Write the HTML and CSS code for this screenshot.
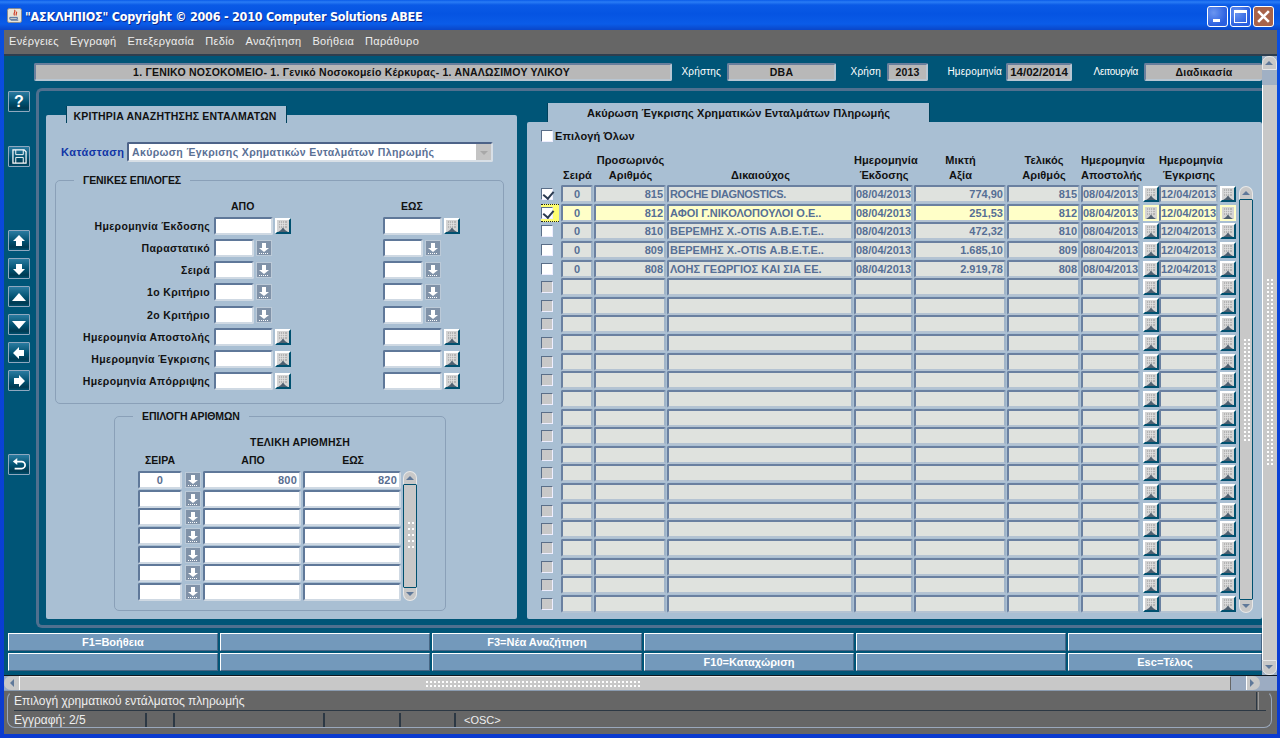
FILE: index.html
```html
<!DOCTYPE html>
<html lang="el">
<head>
<meta charset="utf-8">
<title>ΑΣΚΛΗΠΙΟΣ</title>
<link rel="stylesheet" href="styles.css">
</head>
<body>
<svg class="defs" width="0" height="0" aria-hidden="true">
  <symbol id="cal" viewBox="0 0 12 12">
    <rect width="12" height="12" fill="#d4d4d4"/>
    <path d="M2 1h8v7H2z" fill="#b4b4b4"/>
    <path d="M3.5 1v7M5.5 1v7M7.5 1v7M2 3.5h8M2 5.5h8" stroke="#e4e4e4" stroke-width=".7"/>
    <path d="M1 12l3-2 2-2.5L8 10l3 2z" fill="#4f6070"/>
  </symbol>
  <symbol id="drop" viewBox="0 0 14 14">
    <path d="M5 2h4v5h3l-5 4-5-4h3z" fill="#fff"/>
    <path d="M2 12.5h10" stroke="#fff" stroke-dasharray="1 1"/>
  </symbol>
</svg>

<div class="window">
  <header class="titlebar">
    <svg class="appicon" viewBox="0 0 16 16"><rect x=".5" y=".5" width="15" height="15" rx="2" fill="#e8e4d8" stroke="#8a8a8a"/><path d="M8 2c2 2-2 3 0 6M10 4c1 1-1 2 0 4" stroke="#d0402a" fill="none" stroke-width="1.3"/><path d="M3 10h8v2H3zM4 13h8" stroke="#4a6a9a" fill="none"/></svg>
    <span class="title">"ΑΣΚΛΗΠΙΟΣ" Copyright © 2006 - 2010 Computer Solutions ABEE</span>
    <span class="caps">
      <span class="cap"><i class="g-min"></i></span>
      <span class="cap"><i class="g-max"></i></span>
      <span class="cap close"><svg viewBox="0 0 14 14"><path d="M2 2l10 10M12 2L2 12" stroke="#fff" stroke-width="2.4"/></svg></span>
    </span>
  </header>

  <nav class="menu">
    <span>Ενέργειες</span><span>Εγγραφή</span><span>Επεξεργασία</span><span>Πεδίο</span><span>Αναζήτηση</span><span>Βοήθεια</span><span>Παράθυρο</span>
  </nav>

  <div class="client">
    <div class="stage">
      <div class="info">
        <div class="ifield org">1. ΓΕΝΙΚΟ ΝΟΣΟΚΟΜΕΙΟ- 1. Γενικό Νοσοκομείο Κέρκυρας- 1. ΑΝΑΛΩΣΙΜΟΥ ΥΛΙΚΟΥ</div>
        <label class="ilabel l1">Χρήστης</label><div class="ifield user">DBA</div>
        <label class="ilabel l2">Χρήση</label><div class="ifield year">2013</div>
        <label class="ilabel l3">Ημερομηνία</label><div class="ifield date">14/02/2014</div>
        <label class="ilabel l4">Λειτουργία</label><div class="ifield mode">Διαδικασία</div>
      </div>

      <div class="workspace">
        <aside class="tools">
          <button class="tool t-help">?</button>
          <button class="tool t-save"><svg viewBox="0 0 16 16"><path d="M1 1h12l2 2v12H1z" fill="none" stroke="#fff" stroke-width="1.3"/><path d="M4 1v5h8V1M4 15V9h8v6" fill="none" stroke="#fff"/></svg></button>
          <button class="tool t-up"><svg viewBox="0 0 14 14"><path d="M7 1l6 6H10v5H4V7H1z" fill="#fff"/></svg></button>
          <button class="tool"><svg viewBox="0 0 14 14"><path d="M7 13L1 7h3V2h6v5h3z" fill="#fff"/></svg></button>
          <button class="tool"><svg viewBox="0 0 14 14"><path d="M7 3l7 8H0z" fill="#fff"/></svg></button>
          <button class="tool"><svg viewBox="0 0 14 14"><path d="M7 11L0 3h14z" fill="#fff"/></svg></button>
          <button class="tool"><svg viewBox="0 0 14 14"><path d="M1 7l6-6v3h5v6H7v3z" fill="#fff"/></svg></button>
          <button class="tool"><svg viewBox="0 0 14 14"><path d="M13 7L7 1v3H2v6h5v3z" fill="#fff"/></svg></button>
          <button class="tool t-back"><svg viewBox="0 0 16 16"><path d="M5 4h6a3.5 3.5 0 010 8H3" fill="none" stroke="#fff" stroke-width="2"/><path d="M6 0L1 4l5 4z" fill="#fff"/></svg></button>
        </aside>

        <main class="frame">
          <section class="panel left">
            <h2 class="tab ltab">ΚΡΙΤΗΡΙΑ ΑΝΑΖΗΤΗΣΗΣ ΕΝΤΑΛΜΑΤΩΝ</h2>
            <div class="status-row">
              <label>Κατάσταση</label>
              <div class="select">Ακύρωση Έγκρισης Χρηματικών Ενταλμάτων Πληρωμής<span class="sel-btn"></span></div>
            </div>

            <fieldset class="group general">
              <legend>ΓΕΝΙΚΕΣ ΕΠΙΛΟΓΕΣ</legend>
              <div class="crit head"><span></span><b class="hfrom">ΑΠΟ</b><b class="hto">ΕΩΣ</b></div>
              <div class="crit"><label>Ημερομηνία Έκδοσης</label><div class="pair"><i class="inp w-d"></i><svg class="calb"><use href="#cal"/></svg></div><div class="pair"><i class="inp w-d"></i><svg class="calb"><use href="#cal"/></svg></div></div>
              <div class="crit"><label>Παραστατικό</label><div class="pair"><i class="inp w-s"></i><svg class="dropb"><use href="#drop"/></svg></div><div class="pair"><i class="inp w-s"></i><svg class="dropb"><use href="#drop"/></svg></div></div>
              <div class="crit"><label>Σειρά</label><div class="pair"><i class="inp w-s"></i><svg class="dropb"><use href="#drop"/></svg></div><div class="pair"><i class="inp w-s"></i><svg class="dropb"><use href="#drop"/></svg></div></div>
              <div class="crit"><label>1ο Κριτήριο</label><div class="pair"><i class="inp w-s"></i><svg class="dropb"><use href="#drop"/></svg></div><div class="pair"><i class="inp w-s"></i><svg class="dropb"><use href="#drop"/></svg></div></div>
              <div class="crit"><label>2ο Κριτήριο</label><div class="pair"><i class="inp w-s"></i><svg class="dropb"><use href="#drop"/></svg></div><div class="pair"><i class="inp w-s"></i><svg class="dropb"><use href="#drop"/></svg></div></div>
              <div class="crit"><label>Ημερομηνία Αποστολής</label><div class="pair"><i class="inp w-d"></i><svg class="calb"><use href="#cal"/></svg></div><div class="pair"><i class="inp w-d"></i><svg class="calb"><use href="#cal"/></svg></div></div>
              <div class="crit"><label>Ημερομηνία Έγκρισης</label><div class="pair"><i class="inp w-d"></i><svg class="calb"><use href="#cal"/></svg></div><div class="pair"><i class="inp w-d"></i><svg class="calb"><use href="#cal"/></svg></div></div>
              <div class="crit"><label>Ημερομηνία Απόρριψης</label><div class="pair"><i class="inp w-d"></i><svg class="calb"><use href="#cal"/></svg></div><div class="pair"><i class="inp w-d"></i><svg class="calb"><use href="#cal"/></svg></div></div>
            </fieldset>

            <fieldset class="group numbers">
              <legend>ΕΠΙΛΟΓΗ ΑΡΙΘΜΩΝ</legend>
              <div class="num-title">ΤΕΛΙΚΗ ΑΡΙΘΜΗΣΗ</div>
              <div class="num-head"><b>ΣΕΙΡΑ</b><b>ΑΠΟ</b><b>ΕΩΣ</b></div>
              <div class="num-body">
                <div class="num-rows">
                  <div class="nrow"><i class="inp c">0</i><svg class="dropb"><use href="#drop"/></svg><i class="inp r">800</i><i class="inp r">820</i></div>
                  <div class="nrow"><i class="inp"></i><svg class="dropb"><use href="#drop"/></svg><i class="inp"></i><i class="inp"></i></div>
                  <div class="nrow"><i class="inp"></i><svg class="dropb"><use href="#drop"/></svg><i class="inp"></i><i class="inp"></i></div>
                  <div class="nrow"><i class="inp"></i><svg class="dropb"><use href="#drop"/></svg><i class="inp"></i><i class="inp"></i></div>
                  <div class="nrow"><i class="inp"></i><svg class="dropb"><use href="#drop"/></svg><i class="inp"></i><i class="inp"></i></div>
                  <div class="nrow"><i class="inp"></i><svg class="dropb"><use href="#drop"/></svg><i class="inp"></i><i class="inp"></i></div>
                  <div class="nrow"><i class="inp"></i><svg class="dropb"><use href="#drop"/></svg><i class="inp"></i><i class="inp"></i></div>
                </div>
                <div class="vbar small"><span class="up"></span><span class="track"><span class="grip"></span></span><span class="down"></span></div>
              </div>
            </fieldset>
          </section>

          <section class="panel right">
            <h2 class="tab rtab">Ακύρωση Έγκρισης Χρηματικών Ενταλμάτων Πληρωμής</h2>
            <div class="select-all"><i class="cb"></i><span>Επιλογή Όλων</span></div>
            <div class="grid-area">
              <div class="gcols ghead">
                <span></span><b>Σειρά</b><b>Προσωρινός<br>Αριθμός</b><b>Δικαιούχος</b><b>Ημερομηνία<br>Έκδοσης</b><b>Μικτή<br>Αξία</b><b>Τελικός<br>Αριθμός</b><b>Ημερομηνία<br>Αποστολής</b><span></span><b>Ημερομηνία<br>Έγκρισης</b><span></span>
              </div>
              <div class="gbody">
                <div class="grows">
                  <div class="gcols row"><span class="cbc"><i class="cb on"></i></span><i class="f c">0</i><i class="f r">815</i><i class="f latin">ROCHE DIAGNOSTICS.</i><i class="f d">08/04/2013</i><i class="f r">774,90</i><i class="f r">815</i><i class="f d">08/04/2013</i><svg class="calb"><use href="#cal"/></svg><i class="f d">12/04/2013</i><svg class="calb"><use href="#cal"/></svg></div>
                  <div class="gcols row cur"><span class="cbc"><i class="cb on"></i></span><i class="f c">0</i><i class="f r">812</i><i class="f">ΑΦΟΙ Γ.ΝΙΚΟΛΟΠΟΥΛΟΙ Ο.Ε..</i><i class="f d">08/04/2013</i><i class="f r">251,53</i><i class="f r">812</i><i class="f d">08/04/2013</i><svg class="calb"><use href="#cal"/></svg><i class="f d">12/04/2013</i><svg class="calb"><use href="#cal"/></svg></div>
                  <div class="gcols row"><span class="cbc"><i class="cb"></i></span><i class="f c">0</i><i class="f r">810</i><i class="f">ΒΕΡΕΜΗΣ Χ.-OTIS Α.Β.Ε.Τ.Ε..</i><i class="f d">08/04/2013</i><i class="f r">472,32</i><i class="f r">810</i><i class="f d">08/04/2013</i><svg class="calb"><use href="#cal"/></svg><i class="f d">12/04/2013</i><svg class="calb"><use href="#cal"/></svg></div>
                  <div class="gcols row"><span class="cbc"><i class="cb"></i></span><i class="f c">0</i><i class="f r">809</i><i class="f">ΒΕΡΕΜΗΣ Χ.-OTIS Α.Β.Ε.Τ.Ε..</i><i class="f d">08/04/2013</i><i class="f r">1.685,10</i><i class="f r">809</i><i class="f d">08/04/2013</i><svg class="calb"><use href="#cal"/></svg><i class="f d">12/04/2013</i><svg class="calb"><use href="#cal"/></svg></div>
                  <div class="gcols row"><span class="cbc"><i class="cb"></i></span><i class="f c">0</i><i class="f r">808</i><i class="f">ΛΟΗΣ ΓΕΩΡΓΙΟΣ ΚΑΙ ΣΙΑ ΕΕ.</i><i class="f d">08/04/2013</i><i class="f r">2.919,78</i><i class="f r">808</i><i class="f d">08/04/2013</i><svg class="calb"><use href="#cal"/></svg><i class="f d">12/04/2013</i><svg class="calb"><use href="#cal"/></svg></div>
                  <div class="gcols row"><span class="cbc"><i class="cb dis"></i></span><i class="f"></i><i class="f"></i><i class="f"></i><i class="f"></i><i class="f"></i><i class="f"></i><i class="f"></i><svg class="calb"><use href="#cal"/></svg><i class="f"></i><svg class="calb"><use href="#cal"/></svg></div>
                  <div class="gcols row"><span class="cbc"><i class="cb dis"></i></span><i class="f"></i><i class="f"></i><i class="f"></i><i class="f"></i><i class="f"></i><i class="f"></i><i class="f"></i><svg class="calb"><use href="#cal"/></svg><i class="f"></i><svg class="calb"><use href="#cal"/></svg></div>
                  <div class="gcols row"><span class="cbc"><i class="cb dis"></i></span><i class="f"></i><i class="f"></i><i class="f"></i><i class="f"></i><i class="f"></i><i class="f"></i><i class="f"></i><svg class="calb"><use href="#cal"/></svg><i class="f"></i><svg class="calb"><use href="#cal"/></svg></div>
                  <div class="gcols row"><span class="cbc"><i class="cb dis"></i></span><i class="f"></i><i class="f"></i><i class="f"></i><i class="f"></i><i class="f"></i><i class="f"></i><i class="f"></i><svg class="calb"><use href="#cal"/></svg><i class="f"></i><svg class="calb"><use href="#cal"/></svg></div>
                  <div class="gcols row"><span class="cbc"><i class="cb dis"></i></span><i class="f"></i><i class="f"></i><i class="f"></i><i class="f"></i><i class="f"></i><i class="f"></i><i class="f"></i><svg class="calb"><use href="#cal"/></svg><i class="f"></i><svg class="calb"><use href="#cal"/></svg></div>
                  <div class="gcols row"><span class="cbc"><i class="cb dis"></i></span><i class="f"></i><i class="f"></i><i class="f"></i><i class="f"></i><i class="f"></i><i class="f"></i><i class="f"></i><svg class="calb"><use href="#cal"/></svg><i class="f"></i><svg class="calb"><use href="#cal"/></svg></div>
                  <div class="gcols row"><span class="cbc"><i class="cb dis"></i></span><i class="f"></i><i class="f"></i><i class="f"></i><i class="f"></i><i class="f"></i><i class="f"></i><i class="f"></i><svg class="calb"><use href="#cal"/></svg><i class="f"></i><svg class="calb"><use href="#cal"/></svg></div>
                  <div class="gcols row"><span class="cbc"><i class="cb dis"></i></span><i class="f"></i><i class="f"></i><i class="f"></i><i class="f"></i><i class="f"></i><i class="f"></i><i class="f"></i><svg class="calb"><use href="#cal"/></svg><i class="f"></i><svg class="calb"><use href="#cal"/></svg></div>
                  <div class="gcols row"><span class="cbc"><i class="cb dis"></i></span><i class="f"></i><i class="f"></i><i class="f"></i><i class="f"></i><i class="f"></i><i class="f"></i><i class="f"></i><svg class="calb"><use href="#cal"/></svg><i class="f"></i><svg class="calb"><use href="#cal"/></svg></div>
                  <div class="gcols row"><span class="cbc"><i class="cb dis"></i></span><i class="f"></i><i class="f"></i><i class="f"></i><i class="f"></i><i class="f"></i><i class="f"></i><i class="f"></i><svg class="calb"><use href="#cal"/></svg><i class="f"></i><svg class="calb"><use href="#cal"/></svg></div>
                  <div class="gcols row"><span class="cbc"><i class="cb dis"></i></span><i class="f"></i><i class="f"></i><i class="f"></i><i class="f"></i><i class="f"></i><i class="f"></i><i class="f"></i><svg class="calb"><use href="#cal"/></svg><i class="f"></i><svg class="calb"><use href="#cal"/></svg></div>
                  <div class="gcols row"><span class="cbc"><i class="cb dis"></i></span><i class="f"></i><i class="f"></i><i class="f"></i><i class="f"></i><i class="f"></i><i class="f"></i><i class="f"></i><svg class="calb"><use href="#cal"/></svg><i class="f"></i><svg class="calb"><use href="#cal"/></svg></div>
                  <div class="gcols row"><span class="cbc"><i class="cb dis"></i></span><i class="f"></i><i class="f"></i><i class="f"></i><i class="f"></i><i class="f"></i><i class="f"></i><i class="f"></i><svg class="calb"><use href="#cal"/></svg><i class="f"></i><svg class="calb"><use href="#cal"/></svg></div>
                  <div class="gcols row"><span class="cbc"><i class="cb dis"></i></span><i class="f"></i><i class="f"></i><i class="f"></i><i class="f"></i><i class="f"></i><i class="f"></i><i class="f"></i><svg class="calb"><use href="#cal"/></svg><i class="f"></i><svg class="calb"><use href="#cal"/></svg></div>
                  <div class="gcols row"><span class="cbc"><i class="cb dis"></i></span><i class="f"></i><i class="f"></i><i class="f"></i><i class="f"></i><i class="f"></i><i class="f"></i><i class="f"></i><svg class="calb"><use href="#cal"/></svg><i class="f"></i><svg class="calb"><use href="#cal"/></svg></div>
                  <div class="gcols row"><span class="cbc"><i class="cb dis"></i></span><i class="f"></i><i class="f"></i><i class="f"></i><i class="f"></i><i class="f"></i><i class="f"></i><i class="f"></i><svg class="calb"><use href="#cal"/></svg><i class="f"></i><svg class="calb"><use href="#cal"/></svg></div>
                  <div class="gcols row"><span class="cbc"><i class="cb dis"></i></span><i class="f"></i><i class="f"></i><i class="f"></i><i class="f"></i><i class="f"></i><i class="f"></i><i class="f"></i><svg class="calb"><use href="#cal"/></svg><i class="f"></i><svg class="calb"><use href="#cal"/></svg></div>
                  <div class="gcols row"><span class="cbc"><i class="cb dis"></i></span><i class="f"></i><i class="f"></i><i class="f"></i><i class="f"></i><i class="f"></i><i class="f"></i><i class="f"></i><svg class="calb"><use href="#cal"/></svg><i class="f"></i><svg class="calb"><use href="#cal"/></svg></div>
                </div>
                <div class="vbar"><span class="up"></span><span class="track"><span class="grip"></span></span><span class="down"></span></div>
              </div>
            </div>
          </section>
        </main>
      </div>

      <div class="fkeys">
        <button>F1=Βοήθεια</button><button></button><button>F3=Νέα Αναζήτηση</button><button></button><button></button><button></button>
        <button></button><button></button><button></button><button>F10=Καταχώριση</button><button></button><button>Esc=Τέλος</button>
      </div>
    </div>

    <div class="page-v"><span class="up"></span><span class="gap"></span><span class="thumb"><span class="vgrip"></span></span><span class="down"></span></div>
  </div>

  <div class="page-h"><span class="left"></span><span class="thumb"><span class="hgrip"></span></span><span class="gap"></span><span class="right"></span></div>

  <footer class="statusbar">
    <div class="sbox">
      <div class="msg"><span>Επιλογή χρηματικού εντάλματος πληρωμής</span><i></i></div>
      <div class="rec"><span class="s1">Εγγραφή: 2/5</span><span class="s2"></span><span class="s3"></span><span class="s4"></span><span class="s5"></span><span class="s6">&lt;OSC&gt;</span></div>
    </div>
  </footer>
</div>
</body>
</html>
```
FILE: styles.css
```css
* { box-sizing: border-box; }
html, body { margin: 0; padding: 0; height: 738px; overflow: hidden; }
body { font: bold 11px "Liberation Sans", Arial, sans-serif; color: #111; background: #0a3ad0; }
.defs { position: absolute; }
i { font-style: normal; }
button { font: inherit; margin: 0; padding: 0; }

.window { width: 1280px; height: 738px; display: flex; flex-direction: column; padding: 0 3px 4px 4px; background: linear-gradient(#0a4fe0, #0a3ad0); }
.titlebar { height: 30px; margin: 0 -3px 0 -4px; padding: 0 3px 0 7px; display: flex; align-items: center; gap: 3px; flex: none; color: #fff;
  background: linear-gradient(#0a5be8 0, #2a7cf5 2px, #0a5ae6 5px, #0554e2 14px, #0a5ce8 24px, #0a46c8 30px); }
.appicon { width: 15px; height: 15px; margin-top: 1px; }
.title { font: bold 12.5px "DejaVu Sans Condensed", "DejaVu Sans", Tahoma, sans-serif; letter-spacing: -.25px; text-shadow: 1px 1px #0a2a90; flex: 1; white-space: nowrap; margin-top: 2px; }
.caps { display: flex; gap: 2px; margin: 3px 3px 0 0; }
.cap { width: 21px; height: 21px; border: 1px solid #fff; border-radius: 3px; background: radial-gradient(circle at 30% 30%, #6a95f0, #2a5fe0 70%); position: relative; display: flex; align-items: center; justify-content: center; }
.cap.close { background: #a8634a; }
.cap.close svg { width: 15px; height: 15px; }
.g-min { position: absolute; left: 5px; bottom: 4px; width: 7px; height: 3px; background: #fff; }
.g-max { width: 13px; height: 13px; border: 1px solid #fff; border-top-width: 3px; }

.menu { height: 26px; flex: none; background: #666; color: #eee; display: flex; align-items: center; gap: 11px; padding: 0 0 2px 5px; border-bottom: 2px solid #2e3e4e; font: 11px "Liberation Sans", Arial, sans-serif; letter-spacing: .32px; }

.client { flex: none; height: 619px; display: flex; }
.stage { width: 1258px; background: #005577; display: flex; flex-direction: column; overflow: hidden; }
.info { height: 32px; flex: none; display: flex; align-items: flex-start; padding: 7px 0 0 30px; }
.ifield { height: 18px; background: #b8b8b8; border: 2px solid #6a7f9c; border-right-color: #b8c6d2; border-bottom-color: #b8c6d2; border-radius: 2px; text-align: center; line-height: 14px; white-space: nowrap; overflow: hidden; font-size: 10.5px; letter-spacing: .22px; }
.ilabel { color: #fff; font: 10px "Liberation Sans", Arial, sans-serif; line-height: 18px; letter-spacing: .15px; text-align: right; white-space: nowrap; }
.org { width: 638px; padding-right: 3px; }
.l1 { width: 49px; } .user { width: 109px; margin-left: 6px; }
.l2 { width: 45px; } .year { width: 41px; margin-left: 6px; }
.l3 { width: 74px; } .date { width: 66px; margin-left: 4px; font-size: 11.5px; letter-spacing: 0; }
.l4 { width: 66px; letter-spacing: -.25px; } .mode { width: 118px; margin-left: 6px; border-right: 0; }

.workspace { flex: none; height: 540px; display: flex; }
.tools { width: 32px; flex: none; padding: 3px 0 0 4px; display: flex; flex-direction: column; gap: 7px; }
.tool { width: 22px; height: 21px; border: 1px solid #8fa8bf; border-radius: 1px; background: linear-gradient(#2a7ba0, #00506f 55%, #003a52 85%, #00506f); color: #fff; font: bold 16px "Liberation Sans", Arial, sans-serif; line-height: 16px; display: flex; align-items: center; justify-content: center; flex: none; }
.tool svg { width: 14px; height: 14px; display: block; }
.t-save { margin-top: 27px; }
.t-save svg { width: 15px; height: 15px; }
.t-up { margin-top: 56px; }
.t-back { margin-top: 56px; }

.frame { flex: 1; border: 3px solid #50708f; border-right: 0; border-radius: 6px 0 0 6px; display: flex; gap: 10px; padding: 15px 0 6px 7px; min-width: 0; }
.panel { background: #a9bfd3; position: relative; border-radius: 2px; }
.panel.left { width: 471px; margin-top: 9px; padding: 0 13px 0 9px; }
.panel.right { width: 735px; margin-top: 16px; }
.tab { position: absolute; margin: 0; background: #a9bfd3; text-align: center; border-left: 1px solid #00415c; border-right: 1px solid #00415c; white-space: nowrap; }
.ltab { left: 20px; top: -9px; width: 221px; height: 17px; line-height: 20px; font-size: 10.5px; letter-spacing: .17px; padding-right: 3px; }
.rtab { left: 20px; top: -19px; width: 383px; height: 19px; line-height: 20px; font-size: 11px; letter-spacing: .1px; }

.status-row { display: flex; align-items: center; gap: 3px; padding: 27px 0 0 6px; height: 47px; }
.status-row label { color: #1034a6; font-size: 11px; letter-spacing: .5px; width: 63px; white-space: nowrap; }
.select { width: 366px; height: 20px; background: #fff; color: #5a7095; border: 2px solid #4d6388; border-right-color: #d8dfe6; border-bottom-color: #d8dfe6; border-radius: 2px; line-height: 16px; padding-left: 3px; position: relative; font-size: 10.5px; letter-spacing: .37px; white-space: nowrap; }
.sel-btn { position: absolute; right: 0; top: 0; width: 15px; height: 16px; background: #c4c4c4; }
.sel-btn::after { content: ""; position: absolute; left: 4px; top: 7px; border: 4px solid transparent; border-top-color: #a8a8a8; }

.group { margin: 0; padding: 0; border: 1px solid #8aa0b8; border-radius: 5px; position: relative; min-width: 0; }
.group legend { font-size: 10.5px; padding: 0 9px; line-height: 12px; letter-spacing: -.1px; }
.general { height: 230px; margin-top: 12px; }
.general legend { margin-left: 18px; }
.crit { display: grid; grid-template-columns: 158px 169px 1fr; align-items: center; height: 22.15px; }
.crit.head { height: 19px; margin-top: 10px; font-size: 10.5px; }
.crit .hfrom { padding-left: 17px; } .crit .hto { padding-left: 18px; }
.crit label { text-align: right; padding-right: 4px; font-size: 10.5px; letter-spacing: .35px; white-space: nowrap; }
.pair { display: flex; align-items: center; gap: 2px; }
.inp { display: block; height: 18px; background: #fff; border: 2px solid #5f7899; border-right-color: #cfd9e3; border-bottom-color: #cfd9e3; border-radius: 2px; line-height: 14px; color: #5a6e90; font-size: 11px; letter-spacing: .2px; padding: 0 2px; }
.w-d { width: 59px; } .w-s { width: 40px; }
.inp.c { text-align: center; } .inp.r { text-align: right; }
.calb { width: 16px; height: 16px; flex: none; background: #fff; border: 2px solid #00506f; border-top-color: #fff; border-left-color: #fff; display: block; }
.dropb { width: 16px; height: 16px; flex: none; background: #8092a8; border: 1px solid #bccad8; display: block; }

.numbers { margin: 6px 0 0 59px; width: 332px; height: 201px; }
.numbers legend { margin-left: 18px; }
.num-title { text-align: center; font-size: 10.5px; padding: 14px 0 0 40px; height: 26px; line-height: 12px; letter-spacing: .2px; }
.num-head { display: grid; grid-template-columns: 44px 21px 100px 100px; padding: 6px 0 0 23px; height: 23px; line-height: 12px; font-size: 10.5px; }
.num-head b { text-align: center; }
.num-head b:nth-child(2) { grid-column: 3; } .num-head b:nth-child(3) { grid-column: 4; }
.num-body { display: flex; padding-left: 23px; }
.num-rows { display: flex; flex-direction: column; }
.nrow { display: grid; grid-template-columns: 44px 21px 100px 100px; height: 18.67px; align-items: start; }
.nrow .dropb { margin-left: 3px; margin-top: 1px; }
.nrow .inp.r, .nrow .inp:nth-child(n+3) { margin-right: 2px; }

.vbar { width: 14px; display: flex; flex-direction: column; }
.vbar.small { height: 130px; }
.vbar .up, .vbar .down { height: 14px; background: #c8c8c8; flex: none; position: relative; }
.vbar .up { border-radius: 7px 7px 0 0; border: 1px solid #e8e8e8; border-bottom-color: #00506f; }
.vbar .down { border-radius: 0 0 7px 7px; border: 1px solid #e8e8e8; border-top-color: #00506f; }
.vbar .up::after, .vbar .down::after { content: ""; position: absolute; left: 2px; border: 4px solid transparent; }
.vbar .up::after { top: 0; border-bottom-color: #5f7899; }
.vbar .down::after { top: 4px; border-top-color: #5f7899; }
.vbar .track { flex: 1; background: #c8c8c8; border-left: 1px solid #00506f; border-right: 1px solid #00506f; position: relative; }
.grip { position: absolute; left: 3px; top: 34%; width: 7px; height: 28px; background-image: radial-gradient(#fff 0, #fff .7px, transparent 1px); background-size: 4px 6px; }
.gbody .grip { top: 34.6%; height: 105px; background-size: 4px 4px; }

.select-all { display: flex; align-items: center; gap: 2px; margin-top: 8px; padding-left: 14px; height: 12px; font-size: 11px; letter-spacing: .15px; }
.cb { display: block; width: 12px; height: 12px; background: #fff; border: 1px solid #5a6e88; border-right-color: #eef; border-bottom-color: #eef; position: relative; flex: none; }
.cb.on::after { content: ""; position: absolute; left: 3px; top: 0; width: 5px; height: 8px; border: solid #2a3a50; border-width: 0 2px 2px 0; transform: rotate(40deg); }
.cb.dis { background: #c8c8c8; }
.grid-area { padding-left: 14px; }
.gcols { display: grid; grid-template-columns: 20px 33px 73px 187px 60px 93px 74px 60px 18px 60px 20px; }
.ghead { height: 41px; align-items: end; font-size: 11px; text-align: center; line-height: 15px; letter-spacing: .1px; }
.gbody { display: flex; margin-top: 2px; }
.grows { display: flex; flex-direction: column; width: 698px; flex: none; }
.row { height: 18.64px; align-items: start; }
.cbc { display: block; padding-top: 3px; }
.f { display: block; height: 18px; margin-right: 1px; background: #dfe2de; border: 2px solid #6a80a0; border-right-color: #a0b4c8; border-bottom-color: #b4c3d2; border-radius: 2px; color: #566f95; line-height: 14px; font-size: 11px; padding: 0 1px; white-space: nowrap; overflow: hidden; }
.f.c { text-align: center; } .f.r { text-align: right; }
.f.d { padding: 0; }
.f.latin { letter-spacing: -.35px; }
.row.cur .f { background: #ffffc8; }
.row.cur .cbc { background: #ffff70; border-top: 1px dotted #222; border-bottom: 1px dotted #222; height: 18px; padding-top: 2px; width: 18px; }
.row.cur .calb { background: #f6f6d8; border-color: #ffffc8; }
.row .calb { margin: 1px 0 0 2px; }
.row .calb:last-child { margin-left: 1px; }
.gbody > .vbar { margin-top: 1px; height: 427px; }

.fkeys { flex: none; height: 47px; display: grid; grid-template-columns: repeat(5, 210px) 194px; grid-auto-rows: 18px; gap: 2px; padding: 5px 0 0 4px; background: #005577; }
.fkeys button { background: #7399bb; color: #fff; border: 1px solid #fff; border-right-color: #466584; border-bottom-color: #466584; font-size: 11px; letter-spacing: .02px; }

.page-v { width: 15px; flex: none; display: flex; flex-direction: column; background: #a0b0c4; }
.page-v .up { height: 14px; background: #c8c8c8; border-radius: 7px 7px 0 0; border: 1px solid #e8e8e8; position: relative; flex: none; }
.page-v .down { height: 15px; background: #c8c8c8; border-radius: 0 0 7px 7px; border: 1px solid #e8e8e8; position: relative; flex: none; }
.page-v .up::after { content: ""; position: absolute; left: 2px; top: 0; border: 4px solid transparent; border-bottom-color: #5f7899; }
.page-v .down::after { content: ""; position: absolute; left: 2px; top: 4px; border: 4px solid transparent; border-top-color: #5f7899; }
.page-v .gap { height: 15px; flex: none; }
.page-v .thumb { flex: 1; background: #c8c8c8; border-left: 1px solid #fff; position: relative; }
.vgrip { position: absolute; left: 3px; top: 33.5%; width: 8px; height: 188px; background-image: radial-gradient(#fff 0, #fff .7px, transparent 1px); background-size: 4px 4px; }

.page-h { height: 15px; flex: none; display: flex; background: #9cacc2; border-top: 1px solid #101820; }
.page-h .left { width: 16px; background: #c8c8c8; border-radius: 7px 0 0 7px; border-right: 1px solid #fff; position: relative; flex: none; }
.page-h .left::after { content: ""; position: absolute; left: 2px; top: 3px; border: 4px solid transparent; border-right-color: #5f7899; }
.page-h .thumb { width: 1211px; background: #c8c8c8; border-top: 1px solid #eee; border-right: 1px solid #666; position: relative; flex: none; }
.hgrip { position: absolute; left: 405px; top: 3px; width: 215px; height: 8px; background-image: radial-gradient(#fff 0, #fff .7px, transparent 1px); background-size: 4px 4px; }
.page-h .gap { width: 15px; flex: none; }
.page-h .right { width: 14px; background: #c8c8c8; border-radius: 0 7px 7px 0; position: relative; flex: none; border-left: 1px solid #fff; }
.page-h .right::after { content: ""; position: absolute; left: 3px; top: 3px; border: 4px solid transparent; border-left-color: #5f7899; }

.statusbar { flex: 1; background: #666; padding: 0 5px 0 3px; min-height: 0; border-top: 1px solid #8a9bb0; }
.sbox { height: 37px; border: 1px solid #9aa8bc; border-radius: 8px; border-top-color: transparent; padding: 0 0 0 6px; font: 12px "Liberation Sans", Arial, sans-serif; color: #eee; }
.msg { height: 19px; display: flex; align-items: center; border-bottom: 1px solid #2c3844; justify-content: space-between; margin-right: 5px; }
.msg i { width: 3px; height: 18px; border-left: 1px solid #2c3844; border-right: 1px solid #999; margin-right: 7px; }
.rec { height: 17px; display: flex; align-items: center; }
.rec span { display: block; height: 14px; line-height: 14px; border-right: 2px solid #2c3844; white-space: nowrap; }
.s1 { width: 133px; } .s2 { width: 28px; } .s3 { width: 150px; } .s4 { width: 76px; } .s5 { width: 55px; }
.rec .s6 { border: 0; padding-left: 8px; font-size: 11px; }
```
